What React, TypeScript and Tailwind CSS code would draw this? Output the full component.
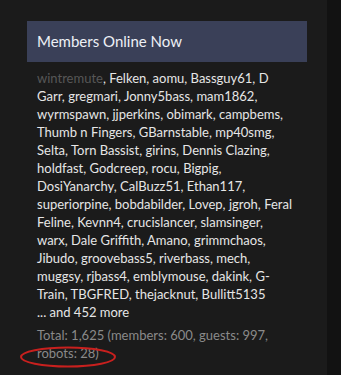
const NAMES =
  "Felken, aomu, Bassguy61, D Garr, gregmari, Jonny5bass, mam1862, wyrmspawn, jjperkins, obimark, campbems, Thumb n Fingers, GBarnstable, mp40smg, Selta, Torn Bassist, girins, Dennis Clazing, holdfast, Godcreep, rocu, Bigpig, DosiYanarchy, CalBuzz51, Ethan117, superiorpine, bobdabilder, Lovep, jgroh, Feral Feline, Kevnn4, crucislancer, slamsinger, warx, Dale Griffith, Amano, grimmchaos, Jibudo, groovebass5, riverbass, mech, muggsy, rjbass4, emblymouse, dakink, G-Train, TBGFRED, thejacknut, Bullitt5135";

export default function App() {
  return (
    <div className="flex h-[375px] w-[341px] overflow-hidden bg-[#121212] font-['Lato',sans-serif]">
      <div className="w-[327px] shrink-0 bg-[#1b1b1b] px-[27px] pt-[21px] pr-[20px]">
        <div className="flex h-[41px] items-center bg-[#3a4058] px-[10px] text-[15px] text-[#eef0f6]">
          Members Online Now
        </div>
        <div className="pl-[10px] pr-[15px] pt-[7px]">
          <p className="text-[13px] leading-[18px] text-[#e6e6e6]">
            <span className="text-[#575757]">wintremute</span>, {NAMES}
            <br />
            ... and 452 more
          </p>
          <p className="mt-[5px] text-[13px] leading-[18px] text-[#8a8a8a]">
            Total: 1,625 (members: 600, guests: 997,{" "}
            <span className="relative inline-block">
              robots: 28)
              <svg className="pointer-events-none absolute left-[-18px] top-[1px]" width="100" height="24" viewBox="0 0 100 24">
                <ellipse cx="49" cy="12" rx="47" ry="9.5" fill="none" stroke="#c8201e" strokeWidth="2" />
              </svg>
            </span>
          </p>
        </div>
      </div>
    </div>
  );
}
